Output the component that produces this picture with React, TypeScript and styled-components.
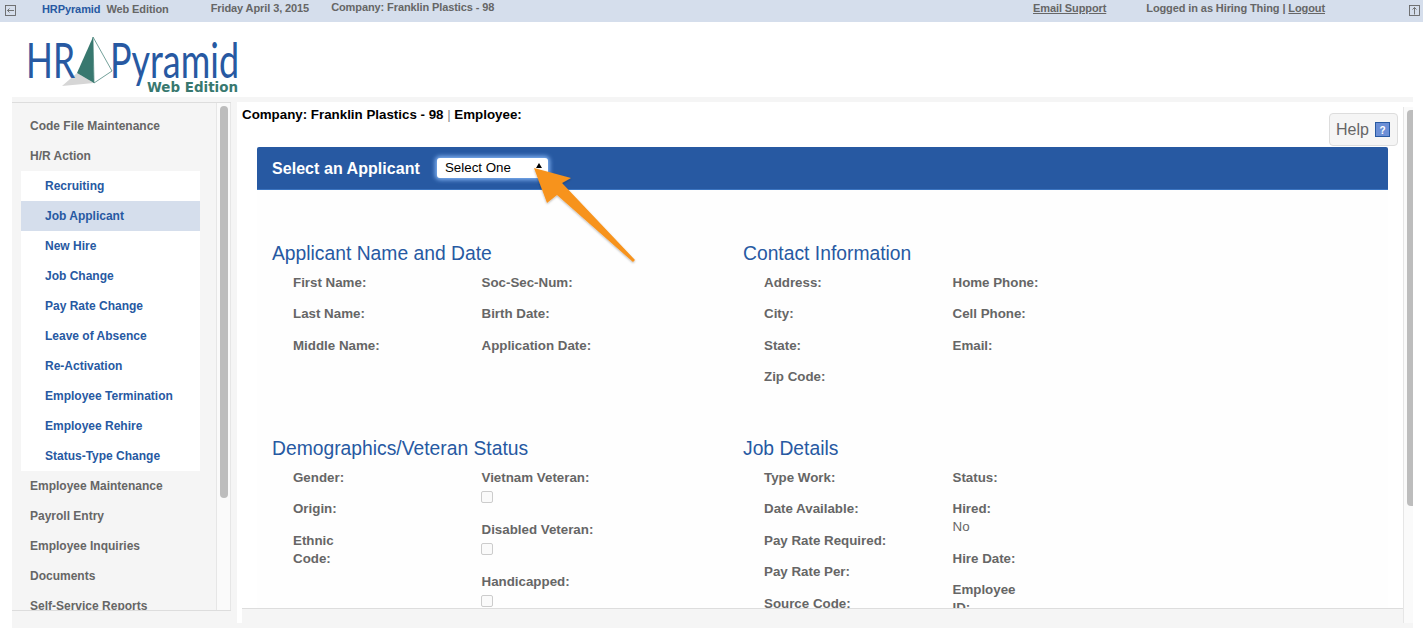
import React from "react";
import styled, { createGlobalStyle } from "styled-components";

const Global = createGlobalStyle`
  html, body { margin: 0; padding: 0; height: 640px; overflow: hidden; background: #fff; }
  body { font-family: "Liberation Sans", Arial, sans-serif; }
`;
const blue = "#2759a2";
const grey = "#666666";

const Page = styled.div`display: flex; flex-direction: column; width: 1423px; height: 640px; overflow: hidden;`;
const TopBar = styled.header`
  display: flex; align-items: center; height: 22px; background: #d5deec; flex: none; box-sizing: border-box; padding-bottom: 4px;
  font-size: 11px; font-weight: bold; color: ${grey}; white-space: nowrap; letter-spacing: -0.1px;
`;
const NavIcon = styled.svg<{ $ml: number; $mr?: number }>`
  width: 11px; height: 11px; margin-left: ${p => p.$ml}px; margin-right: ${p => p.$mr ?? 0}px; flex: none; margin-top: 2px;
`;
const TopText = styled.span<{ $ml?: number; $up?: number; $blue?: boolean }>`
  margin-left: ${p => p.$ml ?? 0}px; padding-bottom: ${p => p.$up ?? 0}px;
  color: ${p => (p.$blue ? blue : grey)};
`;
const TopLink = styled.a`color: ${grey}; text-decoration: underline;`;
const Spacer = styled.div`flex: 1;`;
const Brand = styled.div`height: 75px; flex: none;`;
const LogoSvg = styled.svg`display: block; margin-left: 20px; width: 240px; height: 75px;`;
const Shell = styled.div`
  flex: none; width: 1401px; height: 531px; margin-left: 12px; background: #f5f5f5; padding-top: 5px;
  box-sizing: border-box; display: flex;
`;
const Side = styled.aside`width: 219px; flex: none; display: flex; flex-direction: column;`;
const SideBody = styled.div`height: 509px; flex: none; display: flex; border-top: 1px solid #dddddd; border-bottom: 1px solid #dddddd; box-sizing: border-box; overflow: hidden;`;
const Nav = styled.nav`flex: 1; padding-top: 8px; overflow: hidden;`;
const NavItem = styled.div`height: 30px; line-height: 30px; padding-left: 18px; font-size: 12px; font-weight: bold; color: ${grey};`;
const SubList = styled.div`margin-left: 9px; width: 179px; background: #fff;`;
const SubItem = styled.div<{ $active?: boolean }>`
  height: 30px; line-height: 30px; padding-left: 24px; font-size: 12px; font-weight: bold; color: ${blue};
  background: ${p => (p.$active ? "#d5deec" : "transparent")};
`;
const SideTrack = styled.div`
  width: 13px; flex: none; border-left: 1px solid #e6e6e6; border-right: 1px solid #e6e6e6; background: #fafafa;
  display: flex; flex-direction: column; align-items: center;
`;
const SideThumb = styled.div`width: 8px; height: 392px; margin-top: 3px; background: #bdbdbd; border-radius: 4px;`;
const MainWrap = styled.div`flex: none; width: 1166px; margin-left: 6px; height: 521px; background: #fff; display: flex; flex-direction: column;`;
const MainScroll = styled.main`height: 506px; flex: none; overflow: hidden; position: relative; padding: 5px 0 0 5px; box-sizing: border-box;`;
const MainFoot = styled.div`flex: 1; margin-left: 5px; background: #f5f5f5; border-top: 1px solid #dddddd;`;
const Crumb = styled.div`font-size: 13.33px; font-weight: bold; color: #000; line-height: 16px; height: 16px;`;
const Sep = styled.span`font-weight: normal; color: #888;`;
const HelpRow = styled.div`display: flex; justify-content: flex-end; padding-right: 5px; margin-top: -10px;`;
const HelpBtn = styled.div`
  width: 69px; height: 33px; box-sizing: border-box; border: 1px solid #dddddd; border-radius: 4px; background: #f5f5f5;
  display: flex; align-items: center; gap: 6px; padding-left: 6px; font-size: 16px; color: ${grey};
`;
const Bar = styled.div`
  margin: 1px 15px 0 15px; height: 43px; box-sizing: border-box; background: ${blue}; border-bottom: 1px solid #3b74c0;
  border-radius: 2px 2px 0 0; display: flex; align-items: center; padding: 1px 0 0 15px;
`;
const BarTitle = styled.div`font-size: 16px; font-weight: bold; color: #fff; letter-spacing: 0.05px;`;
const SelectBox = styled.div`
  margin-left: 17px; width: 111px; height: 20px; box-sizing: border-box; background: #fff; border-radius: 3px;
  box-shadow: 0 0 4px 2px #7fb0f0; font-size: 13.33px; color: #000; padding-left: 8px; line-height: 19px; position: relative; margin-top: -2px;
`;
const Caret = styled.i`
  position: absolute; right: 6px; top: 5px; width: 0; height: 0;
  border-left: 3px solid transparent; border-right: 3px solid transparent; border-bottom: 5px solid #000;
`;
const Sections = styled.div`
  margin: 0 15px; padding: 52px 0 0 15px; background: #fefefe; display: grid; grid-template-columns: 471px 1fr;
`;
const Section = styled.section`height: 195px;`;
const SecTitle = styled.h2`margin: 0; font-size: 19.3px; font-weight: normal; color: ${blue}; line-height: 24px;`;
const Cols = styled.div`display: flex; padding: 8px 0 0 21px;`;
const Col = styled.div`width: 188.5px; flex: none;`;
const Field = styled.div`font-size: 13.33px; line-height: 18px; font-weight: bold; color: ${grey}; margin-bottom: 13.4px;`;
const CheckField = styled(Field)`margin-bottom: 18px;`;
const Value = styled.div`font-weight: normal; color: ${grey}; font-size: 13.33px; line-height: 18px;`;
const Check = styled.span`
  display: block; width: 12px; height: 12px; margin: 4px 0 0 -1px; box-sizing: border-box;
  border: 1px solid #cccccc; border-radius: 2px; background: #fafafa;
`;
const Arrow = styled.svg`position: absolute; left: 296px; top: 64px; width: 110px; height: 105px; pointer-events: none; overflow: visible;`;
const TrackWrap = styled.div`flex: none; width: 10px; height: 521px; background: #fff; padding-top: 5px; box-sizing: border-box;`;
const MainTrack = styled.div`
  height: 516px; box-sizing: border-box; border-left: 1px solid #e6e6e6; background: #fafafa; display: flex; flex-direction: column; align-items: flex-end;
`;
const MainThumb = styled.div`width: 6px; height: 396px; margin-top: 3px; background: #bdbdbd; border-radius: 4px 0 0 4px;`;

const sub = ["Recruiting", "Job Applicant", "New Hire", "Job Change", "Pay Rate Change", "Leave of Absence", "Re-Activation", "Employee Termination", "Employee Rehire", "Status-Type Change"];
const after = ["Employee Maintenance", "Payroll Entry", "Employee Inquiries", "Documents", "Self-Service Reports"];

export default function App() {
  return (
    <Page>
      <Global />
      <TopBar>
        <NavIcon $ml={5} viewBox="0 0 11 11" fill="none" stroke="#666" strokeWidth=".9">
          <rect x=".5" y=".5" width="10" height="10" />
          <path d="M2.5 5.5h6.5M2.5 5.5l2-2M2.5 5.5l2 2" />
        </NavIcon>
        <TopText $ml={26} $blue>HRPyramid</TopText>
        <TopText $ml={6}>Web Edition</TopText>
        <TopText $ml={42} $up={3}>Friday April 3, 2015</TopText>
        <TopText $ml={22} $up={5}>Company: Franklin Plastics - 98</TopText>
        <Spacer />
        <TopText $up={3}><TopLink>Email Support</TopLink></TopText>
        <TopText $ml={40} $up={2}>Logged in as Hiring Thing | <TopLink>Logout</TopLink></TopText>
        <NavIcon $ml={84} $mr={3} viewBox="0 0 11 11" fill="none" stroke="#666" strokeWidth=".9">
          <rect x=".5" y=".5" width="10" height="10" />
          <path d="M5.5 2.5v7M5.5 2.5l-2 2M5.5 2.5l2 2" />
        </NavIcon>
      </TopBar>
      <Brand>
        <LogoSvg viewBox="20 22 240 75">
          <polygon points="62,86 77,73 94,83" fill="#d6d6d6" />
          <polygon points="93,37 77,73 94,83" fill="#38786f" />
          <polygon points="93,37 112,71 94,83" fill="#fff" stroke="#38786f" strokeWidth=".7" />
          <text x="26" y="77.5" fontFamily="Lato" fontWeight="400" fontSize="48" fill={blue} textLength="49" lengthAdjust="spacingAndGlyphs">HR</text>
          <text x="110" y="77.5" fontFamily="Lato" fontWeight="400" fontSize="48" fill={blue} textLength="129" lengthAdjust="spacingAndGlyphs">Pyramid</text>
          <text x="147" y="92" fontFamily="DejaVu Sans" fontWeight="bold" fontSize="13.5" fill="#38786f" textLength="91" lengthAdjust="spacingAndGlyphs">Web Edition</text>
        </LogoSvg>
      </Brand>
      <Shell>
        <Side>
          <SideBody>
            <Nav>
              <NavItem>Code File Maintenance</NavItem>
              <NavItem>H/R Action</NavItem>
              <SubList>
                {sub.map(s => <SubItem key={s} $active={s === "Job Applicant"}>{s}</SubItem>)}
              </SubList>
              {after.map(s => <NavItem key={s}>{s}</NavItem>)}
            </Nav>
            <SideTrack>
              <SideThumb />
            </SideTrack>
          </SideBody>
        </Side>
        <MainWrap>
          <MainScroll>
            <Crumb>Company: Franklin Plastics - 98 <Sep>|</Sep> Employee:</Crumb>
            <HelpRow>
              <HelpBtn>Help
                <svg width="15" height="15" viewBox="0 0 15 15">
                  <rect x=".5" y=".5" width="14" height="14" fill="#6b8fd6" stroke="#2759a2" />
                  <text x="7.5" y="11.5" textAnchor="middle" fontFamily="Liberation Sans" fontWeight="bold" fontSize="10" fill="#fff">?</text>
                </svg>
              </HelpBtn>
            </HelpRow>
            <Bar>
              <BarTitle>Select an Applicant</BarTitle>
              <SelectBox>Select One<Caret /></SelectBox>
            </Bar>
            <Sections>
              <Section>
                <SecTitle>Applicant Name and Date</SecTitle>
                <Cols>
                  <Col>
                    <Field>First Name:</Field>
                    <Field>Last Name:</Field>
                    <Field>Middle Name:</Field>
                  </Col>
                  <Col>
                    <Field>Soc-Sec-Num:</Field>
                    <Field>Birth Date:</Field>
                    <Field>Application Date:</Field>
                  </Col>
                </Cols>
              </Section>
              <Section>
                <SecTitle>Contact Information</SecTitle>
                <Cols>
                  <Col>
                    <Field>Address:</Field>
                    <Field>City:</Field>
                    <Field>State:</Field>
                    <Field>Zip Code:</Field>
                  </Col>
                  <Col>
                    <Field>Home Phone:</Field>
                    <Field>Cell Phone:</Field>
                    <Field>Email:</Field>
                  </Col>
                </Cols>
              </Section>
              <Section>
                <SecTitle>Demographics/Veteran Status</SecTitle>
                <Cols>
                  <Col>
                    <Field>Gender:</Field>
                    <Field>Origin:</Field>
                    <Field>Ethnic<br />Code:</Field>
                  </Col>
                  <Col>
                    <CheckField>Vietnam Veteran:<Check /></CheckField>
                    <CheckField>Disabled Veteran:<Check /></CheckField>
                    <CheckField>Handicapped:<Check /></CheckField>
                  </Col>
                </Cols>
              </Section>
              <Section>
                <SecTitle>Job Details</SecTitle>
                <Cols>
                  <Col>
                    <Field>Type Work:</Field>
                    <Field>Date Available:</Field>
                    <Field>Pay Rate Required:</Field>
                    <Field>Pay Rate Per:</Field>
                    <Field>Source Code:</Field>
                  </Col>
                  <Col>
                    <Field>Status:</Field>
                    <Field>Hired:<Value>No</Value></Field>
                    <Field>Hire Date:</Field>
                    <Field>Employee<br />ID:</Field>
                  </Col>
                </Cols>
              </Section>
            </Sections>
            <Arrow viewBox="0 0 110 105">
              <defs>
                <filter id="as" x="-20%" y="-20%" width="140%" height="140%">
                  <feDropShadow dx="0" dy="1" stdDeviation="1" floodColor="#000" floodOpacity=".3" />
                </filter>
              </defs>
              <polygon filter="url(#as)" fill="#f7931e" points="1,2 38,12 29,17 102,94 100,96 24,29 14,37" />
            </Arrow>
          </MainScroll>
          <MainFoot />
        </MainWrap>
        <TrackWrap>
          <MainTrack>
            <MainThumb />
          </MainTrack>
        </TrackWrap>
      </Shell>
    </Page>
  );
}
